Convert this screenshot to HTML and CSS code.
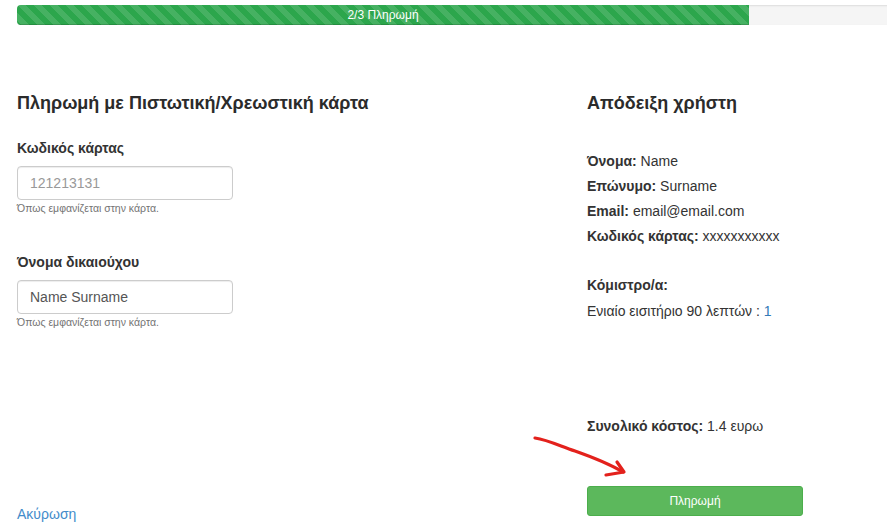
FILE: index.html
```html
<!DOCTYPE html>
<html lang="el">
<head>
<meta charset="utf-8">
<title>Πληρωμή</title>
<link rel="stylesheet" href="styles.css">
</head>
<body>
<div class="page">
  <div class="progress">
    <div class="progress-bar" style="width: 732px;">2/3 Πληρωμή</div>
  </div>
  <div class="columns">
    <div class="col-left">
      <h4 class="title">Πληρωμή με Πιστωτική/Χρεωστική κάρτα</h4>
      <div class="group group-first">
        <label class="label">Κωδικός κάρτας</label>
        <input class="field" type="text" placeholder="121213131">
        <div class="help">Όπως εμφανίζεται στην κάρτα.</div>
      </div>
      <div class="group group-second">
        <label class="label">Όνομα δικαιούχου</label>
        <input class="field" type="text" value="Name Surname">
        <div class="help">Όπως εμφανίζεται στην κάρτα.</div>
      </div>
      <a class="cancel" href="#">Ακύρωση</a>
    </div>
    <div class="col-right">
      <h4 class="title">Απόδειξη χρήστη</h4>
      <div class="receipt">
        <div class="row"><b>Όνομα:</b> Name</div>
        <div class="row"><b>Επώνυμο:</b> Surname</div>
        <div class="row"><b>Email:</b> email@email.com</div>
        <div class="row"><b>Κωδικός κάρτας:</b> xxxxxxxxxxx</div>
      </div>
      <div class="fares">
        <div class="row"><b>Κόμιστρο/α:</b></div>
        <div class="row">Ενιαίο εισιτήριο 90 λεπτών : <span class="qty">1</span></div>
      </div>
      <div class="total row"><b>Συνολικό κόστος:</b> 1.4 ευρω</div>
      <button class="pay" type="button">Πληρωμή</button>
    </div>
  </div>
  <svg class="arrow" width="110" height="60" viewBox="525 425 110 60" xmlns="http://www.w3.org/2000/svg">
    <path d="M535 438 C 548 440, 560 446, 575 451 C 592 457, 608 463, 623 472" fill="none" stroke="#e3211c" stroke-width="3.2" stroke-linecap="round"/>
    <path d="M617 462 L 624 472 L 606 475" fill="none" stroke="#e3211c" stroke-width="3.2" stroke-linecap="round" stroke-linejoin="round"/>
  </svg>
</div>
</body>
</html>
```

FILE: styles.css
```css
* { box-sizing: border-box; }

html, body {
  margin: 0;
  padding: 0;
  background: #fff;
}

body {
  font-family: "Liberation Sans", Arial, sans-serif;
  font-size: 14px;
  color: #333;
  overflow: hidden;
}

.page {
  position: relative;
  padding: 5px 0 0 17px;
  width: 887px;
  height: 529px;
}

.progress {
  height: 20px;
  width: 890px;
  background: #f5f5f5;
  border-radius: 4px;
  box-shadow: inset 0 1px 2px rgba(0,0,0,.1);
  overflow: hidden;
}

.progress-bar {
  height: 20px;
  line-height: 20px;
  font-size: 12px;
  color: #fff;
  text-align: center;
  background-color: #2ca64c;
  background-image: linear-gradient(45deg, rgba(255,255,255,.12) 25%, transparent 25%, transparent 50%, rgba(255,255,255,.12) 50%, rgba(255,255,255,.12) 75%, transparent 75%, transparent);
  background-size: 16px 16px;
  box-shadow: inset 0 -1px 0 rgba(0,0,0,.15);
}

.columns {
  display: grid;
  grid-template-columns: 570px 1fr;
  margin-top: 68px;
}

.title {
  margin: 0;
  font-size: 18px;
  line-height: 20px;
  font-weight: bold;
  color: #2b2b2b;
}

.col-left, .col-right {
  display: flex;
  flex-direction: column;
  align-items: flex-start;
}

.group { display: flex; flex-direction: column; }
.group-first { margin-top: 25px; }
.group-second { margin-top: 37px; }

.label {
  font-weight: bold;
  line-height: 20px;
  font-size: 14px;
}

.field {
  margin-top: 8px;
  width: 216px;
  height: 34px;
  padding: 6px 12px;
  font-family: "Liberation Sans", Arial, sans-serif;
  font-size: 14px;
  color: #555;
  border: 1px solid #ccc;
  border-radius: 4px;
  box-shadow: inset 0 1px 1px rgba(0,0,0,.075);
  outline: none;
}

.field::placeholder { color: #999; }

.help {
  margin-top: 1px;
  font-size: 10.5px;
  line-height: 14px;
  color: #737373;
}

.cancel {
  margin-top: 175px;
  line-height: 20px;
  color: #428bca;
  text-decoration: none;
}

.row { line-height: 25px; }
.receipt { margin-top: 35.5px; }
.fares { margin-top: 24px; }
.fares .row + .row { margin-top: 1px; }
.qty { color: #337ab7; }
.total { margin-top: 90px; }

.pay {
  margin-top: 47.5px;
  width: 216px;
  height: 30px;
  background: #5cb85c;
  border: 1px solid #4cae4c;
  border-radius: 3px;
  color: #fff;
  font-family: "Liberation Sans", Arial, sans-serif;
  font-size: 12px;
}

.arrow {
  position: absolute;
  left: 525px;
  top: 425px;
}
```
